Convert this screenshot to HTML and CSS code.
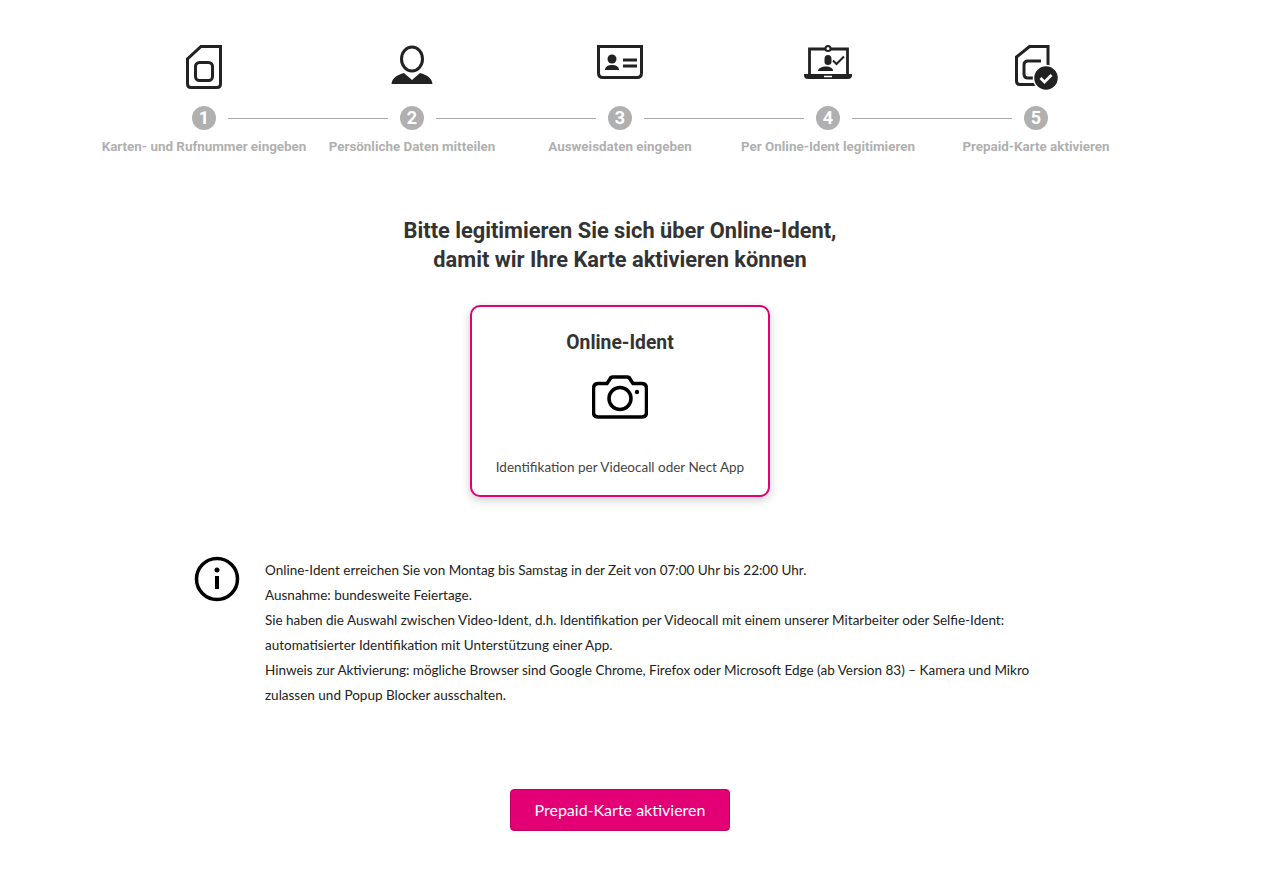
FILE: index.html
```html
<!doctype html>
<html lang="de">
    <head>
        <meta charset="utf-8">
        <title>Prepaid-Karte aktivieren</title>
        <link rel="stylesheet" href="styles.css">
    </head>
    <body>
        <div class="page">
            <!-- progress steps -->
            <div class="steps">
                <div class="step-icon">
                    <svg width="60" height="48" viewBox="0 0 60 48" fill="none" stroke="#222" stroke-width="3">
                        <path d="M46.500 3.500H27L13.500 16V41Q13.500 44.500 17 44.500H43Q46.500 44.500 46.500 41Z"/>
                        <rect x="21.500" y="19.500" width="17" height="18" rx="4"/>
                    </svg>
                </div>
                <div class="step-icon">
                    <svg width="60" height="48" viewBox="0 0 60 48" fill="none" stroke="#222" stroke-width="3">
                        <ellipse cx="30" cy="16" rx="10.500" ry="12"/>
                        <path d="M9.500 41C10 35 15 32 22 30L30 37L38 30C45 32 50 35 50.500 41Z" fill="#222" stroke="none"/>
                    </svg>
                </div>
                <div class="step-icon">
                    <svg width="60" height="48" viewBox="0 0 60 48" fill="none" stroke="#222" stroke-width="3">
                        <path d="M8.500 3.500H51.500V30Q51.500 34.500 47 34.500H13Q8.500 34.500 8.500 30Z"/>
                        <circle cx="22" cy="16" r="4.500" fill="#222" stroke="none"/>
                        <path d="M15 27C15 23 19 22 22 22S29 23 29 27Z" fill="#222" stroke="none"/>
                        <path d="M33 17H47M33 23H47"/>
                    </svg>
                </div>
                <div class="step-icon">
                    <svg width="60" height="48" viewBox="0 0 60 48" fill="none" stroke="#222" stroke-width="2.800">
                        <path d="M11.500 31V6H49.500V31"/>
                        <path d="M6 31H54V32Q54 36 50 36H10Q6 36 6 32Z" fill="#222" stroke="none"/>
                        <path d="M26 33.500H34" stroke="#fff" stroke-width="1.500"/>
                        <circle cx="30" cy="5.500" r="2.500" fill="#fff" stroke-width="2"/>
                        <path d="M26.500 16C26.500 13.500 27.800 12 30 12S33.500 13.500 33.500 16V19C33.500 21 32 22 30 22S26.500 21 26.500 19Z" fill="#222" stroke="none"/>
                        <path d="M20 28C20 25 24 23.500 28 23.500S35 25 35 28Z" fill="#222" stroke="none"/>
                        <path d="M35 17.500L38.500 21L46 13.500" stroke-width="2"/>
                    </svg>
                </div>
                <div class="step-icon">
                    <svg width="60" height="48" viewBox="0 0 60 48" fill="none" stroke="#222" stroke-width="3">
                        <path d="M42 32V3.500H23.500L10.500 14V38Q10.500 41.500 14 41.500H32"/>
                        <path d="M35 18H22Q18 18 18 22V31Q18 35 22 35H30"/>
                        <circle cx="40" cy="35" r="12.500" fill="#222" stroke="#fff" stroke-width="1.500"/>
                        <path d="M34.500 35L38.500 39L45.500 32" stroke="#fff" stroke-width="2.800"/>
                    </svg>
                </div>
            </div>

            <div class="track">
                <span class="step-num">1</span><span class="step-line"></span>
                <span class="step-num">2</span><span class="step-line"></span>
                <span class="step-num">3</span><span class="step-line"></span>
                <span class="step-num">4</span><span class="step-line"></span>
                <span class="step-num">5</span>
            </div>

            <div class="steps">
                <div class="step-label">Karten- und Rufnummer eingeben</div>
                <div class="step-label">Persönliche Daten mitteilen</div>
                <div class="step-label">Ausweisdaten eingeben</div>
                <div class="step-label">Per Online-Ident legitimieren</div>
                <div class="step-label">Prepaid-Karte aktivieren</div>
            </div>

            <h1>Bitte legitimieren Sie sich über Online-Ident,<br>damit wir Ihre Karte aktivieren können</h1>

            <div class="card">
                <h2>Online-Ident</h2>
                <svg class="card-icon" width="56" height="44" viewBox="0 0 56 44" fill="none" stroke="#000" stroke-width="3.500">
                    <path d="M6.500 8.500H15L18 4Q18.500 2 21 2H35Q37.500 2 38 4L41 8.500H49.500Q54.500 8.500 54.500 13.500V37.500Q54.500 42 49.500 42H6.500Q1.500 42 1.500 37.500V13.500Q1.500 8.500 6.500 8.500Z"/>
                    <circle cx="28" cy="23.500" r="11"/>
                    <circle cx="45" cy="17" r="2.200" fill="#000" stroke="none"/>
                </svg>
                <p class="card-text">Identifikation per Videocall oder Nect App</p>
            </div>

            <div class="info">
                <svg class="info-icon" width="46" height="46" viewBox="0 0 46 46" fill="none" stroke="#000" stroke-width="3.500">
                    <circle cx="23" cy="23" r="20.500"/>
                    <circle cx="23" cy="14" r="2.500" fill="#000" stroke="none"/>
                    <path d="M23 20V33" stroke-width="4"/>
                </svg>
                <p class="info-text">
                    Online-Ident erreichen Sie von Montag bis Samstag in der Zeit von 07:00 Uhr bis 22:00 Uhr.<br>
                    Ausnahme: bundesweite Feiertage.<br>
                    Sie haben die Auswahl zwischen Video-Ident, d.h. Identifikation per Videocall mit einem unserer Mitarbeiter oder Selfie-Ident:<br>
                    automatisierter Identifikation mit Unterstützung einer App.<br>
                    Hinweis zur Aktivierung: mögliche Browser sind Google Chrome, Firefox oder Microsoft Edge (ab Version 83) – Kamera und Mikro<br>
                    zulassen und Popup Blocker ausschalten.
                </p>
            </div>

            <div class="actions">
                <a class="button" href="#">Prepaid-Karte aktivieren</a>
            </div>
        </div>
    </body>
</html>
```

FILE: styles.css
```css
html, body { margin: 0; background: #fff; }
body { font-family: "Lato", sans-serif; color: #333; }
a { text-decoration: none; }
h1, h2, p { margin: 0; }

.page { width: 1240px; padding-top: 43px; display: flex; flex-direction: column; align-items: center; }

/* steps */
.steps { display: grid; grid-template-columns: repeat(5, 208px); }
.step-icon { display: flex; justify-content: center; height: 48px; }
.step-label { text-align: center; font-family: "Roboto", sans-serif; font-size: 13.4px; font-weight: 700; line-height: 20px; color: #b0b0b0; white-space: nowrap; }
.track { display: flex; align-items: center; width: 856px; margin: 15px 0 7px 0; }
.step-num { width: 24px; height: 24px; border-radius: 50%; background: #b0b0b0; color: #fff; font-family: "Roboto", sans-serif; font-size: 18px; font-weight: 700; line-height: 24px; text-align: center; }
.step-line { flex: 1; height: 1px; margin: 0 12px; background: #a8a8a8; }

/* heading */
h1 { margin-top: 59px; font-family: "Roboto", sans-serif; font-size: 21.8px; font-weight: 700; line-height: 29px; text-align: center; color: #333; }

/* card */
.card { box-sizing: border-box; width: 300px; height: 192px; margin-top: 31px; padding-top: 23px; display: flex; flex-direction: column; align-items: center; background: #fff; border: 2px solid #e20074; border-radius: 10px; box-shadow: 0 3px 10px rgba(0, 0, 0, 0.2); }
.card h2 { font-family: "Roboto", sans-serif; font-size: 19.3px; font-weight: 700; line-height: 26px; color: #333; }
.card-icon { margin-top: 19px; }
.card-text { margin-top: 38px; font-size: 13.5px; line-height: 20px; color: #444; }

/* info */
.info { display: flex; align-items: flex-start; width: 852px; margin-top: 59px; }
.info-icon { flex: none; margin-right: 25px; }
.info-text { padding-top: 2px; font-size: 13.5px; line-height: 25px; color: #222; white-space: nowrap; }

/* button */
.actions { margin-top: 81px; margin-bottom: 52px; }
.button { box-sizing: border-box; width: 220px; height: 42px; padding-bottom: 2px; display: flex; justify-content: center; align-items: center; background: #e20074; border: 1px solid #c00063; border-radius: 4px; color: #fff; font-size: 16px; }
```
